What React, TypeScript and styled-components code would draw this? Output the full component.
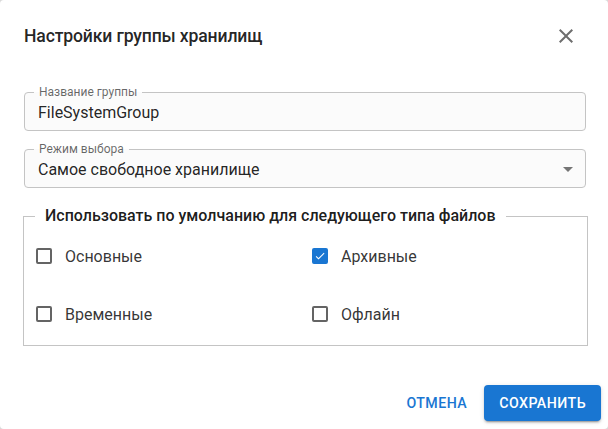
import { createGlobalStyle, styled } from "styled-components";

const GlobalStyle = createGlobalStyle`
  * { box-sizing: border-box; }
  html, body {
    margin: 0;
    padding: 0;
    background: #d9d9d9;
    font-family: Roboto, "Noto Sans", "Liberation Sans", sans-serif;
  }
`;

const Dialog = styled.div`
  width: 608px;
  height: 429px;
  background: #fff;
  border-radius: 4px;
  display: flex;
  flex-direction: column;
  overflow: hidden;
`;

const Header = styled.div`
  height: 72px;
  padding: 0 30px 0 24px;
  display: flex;
  align-items: center;
  justify-content: space-between;
`;

const Title = styled.h2`
  margin: 0;
  font-size: 17.6px;
  font-weight: 500;
  color: rgba(0, 0, 0, 0.87);
  letter-spacing: -0.15px;
`;

const CloseButton = styled.button`
  border: none;
  background: none;
  padding: 0;
  width: 24px;
  height: 24px;
  display: flex;
  color: #6e6e6e;
  cursor: pointer;
`;

const Content = styled.div`
  padding: 13px 22px 0 23px;
  display: flex;
  flex-direction: column;
`;

const Field = styled.fieldset<{ $gap?: number }>`
  margin: ${(p) => p.$gap ?? 0}px 0 0 1px;
  padding: 0 13px 5px 13px;
  width: 562px;
  min-width: 0;
  border: 1px solid #c4c4c4;
  border-radius: 4px;
  background: #fbfbfb;
`;

const FieldLabel = styled.legend`
  margin-left: -4px;
  padding: 0 5px;
  font-size: 12px;
  line-height: 14px;
  color: rgba(0, 0, 0, 0.6);
`;

const FieldRow = styled.div`
  height: 26px;
  display: flex;
  align-items: center;
  justify-content: space-between;
  font-size: 16px;
  color: rgba(0, 0, 0, 0.87);
`;

const DropArrow = styled.svg`
  width: 24px;
  height: 24px;
  margin-right: -8px;
  fill: #757575;
`;

const Group = styled.fieldset`
  margin: 18px 0 0 0;
  padding: 9px 12px 10px 12px;
  width: 565px;
  min-width: 0;
  border: 1px solid #c4c4c4;
`;

const GroupTitle = styled.legend`
  margin-left: -1px;
  padding: 0 10px;
  font-size: 16px;
  line-height: 20px;
  font-weight: 500;
  color: rgba(0, 0, 0, 0.9);
`;

const Options = styled.div`
  display: grid;
  grid-template-columns: 276px 1fr;
  grid-auto-rows: 42px;
  row-gap: 16px;
`;

const Option = styled.label`
  display: flex;
  align-items: center;
  font-size: 16px;
  color: rgba(0, 0, 0, 0.8);
  cursor: pointer;
`;

const Box = styled.span<{ $checked?: boolean }>`
  width: 16px;
  height: 16px;
  margin-right: 13px;
  border-radius: 2px;
  border: 2px solid ${(p) => (p.$checked ? "#1976d2" : "#646464")};
  background: ${(p) => (p.$checked ? "#1976d2" : "transparent")};
  display: flex;
  align-items: center;
  justify-content: center;
`;

const Actions = styled.div`
  margin-top: auto;
  padding: 0 7px 8px 0;
  display: flex;
  justify-content: flex-end;
  align-items: center;
  gap: 9px;
`;

const Button = styled.button<{ $primary?: boolean }>`
  height: 36px;
  padding: 0 ${(p) => (p.$primary ? 15 : 8)}px;
  border: none;
  border-radius: 4px;
  font-family: inherit;
  font-size: 14.2px;
  font-weight: 500;
  letter-spacing: 0.45px;
  text-transform: uppercase;
  color: ${(p) => (p.$primary ? "#fff" : "#1976d2")};
  background: ${(p) => (p.$primary ? "#1976d2" : "transparent")};
  box-shadow: ${(p) =>
    p.$primary
      ? "0 3px 1px -2px rgba(0,0,0,0.2), 0 2px 2px 0 rgba(0,0,0,0.14), 0 1px 5px 0 rgba(0,0,0,0.12)"
      : "none"};
  cursor: pointer;
`;

const options = [
  { label: "Основные", checked: false },
  { label: "Архивные", checked: true },
  { label: "Временные", checked: false },
  { label: "Офлайн", checked: false },
];

function App() {
  return (
    <>
      <GlobalStyle />
      <Dialog>
        <Header>
          <Title>Настройки группы хранилищ</Title>
          <CloseButton aria-label="close">
            <svg viewBox="0 0 24 24" width="24" height="24" fill="currentColor">
              <path d="M19 6.41 17.59 5 12 10.59 6.41 5 5 6.41 10.59 12 5 17.59 6.41 19 12 13.41 17.59 19 19 17.59 13.41 12z" />
            </svg>
          </CloseButton>
        </Header>
        <Content>
          <Field>
            <FieldLabel>Название группы</FieldLabel>
            <FieldRow>FileSystemGroup</FieldRow>
          </Field>
          <Field $gap={11}>
            <FieldLabel>Режим выбора</FieldLabel>
            <FieldRow>
              Самое свободное хранилище
              <DropArrow viewBox="0 0 24 24">
                <path d="M7 10l5 5 5-5z" />
              </DropArrow>
            </FieldRow>
          </Field>
          <Group>
            <GroupTitle>Использовать по умолчанию для следующего типа файлов</GroupTitle>
            <Options>
              {options.map((o) => (
                <Option key={o.label}>
                  <Box $checked={o.checked}>
                    {o.checked && (
                      <svg viewBox="0 0 24 24" width="16" height="16" fill="#fff">
                        <path d="M9 16.17 4.83 12l-1.42 1.41L9 19 21 7l-1.41-1.41z" />
                      </svg>
                    )}
                  </Box>
                  {o.label}
                </Option>
              ))}
            </Options>
          </Group>
        </Content>
        <Actions>
          <Button>Отмена</Button>
          <Button $primary>Сохранить</Button>
        </Actions>
      </Dialog>
    </>
  );
}

export default App;
